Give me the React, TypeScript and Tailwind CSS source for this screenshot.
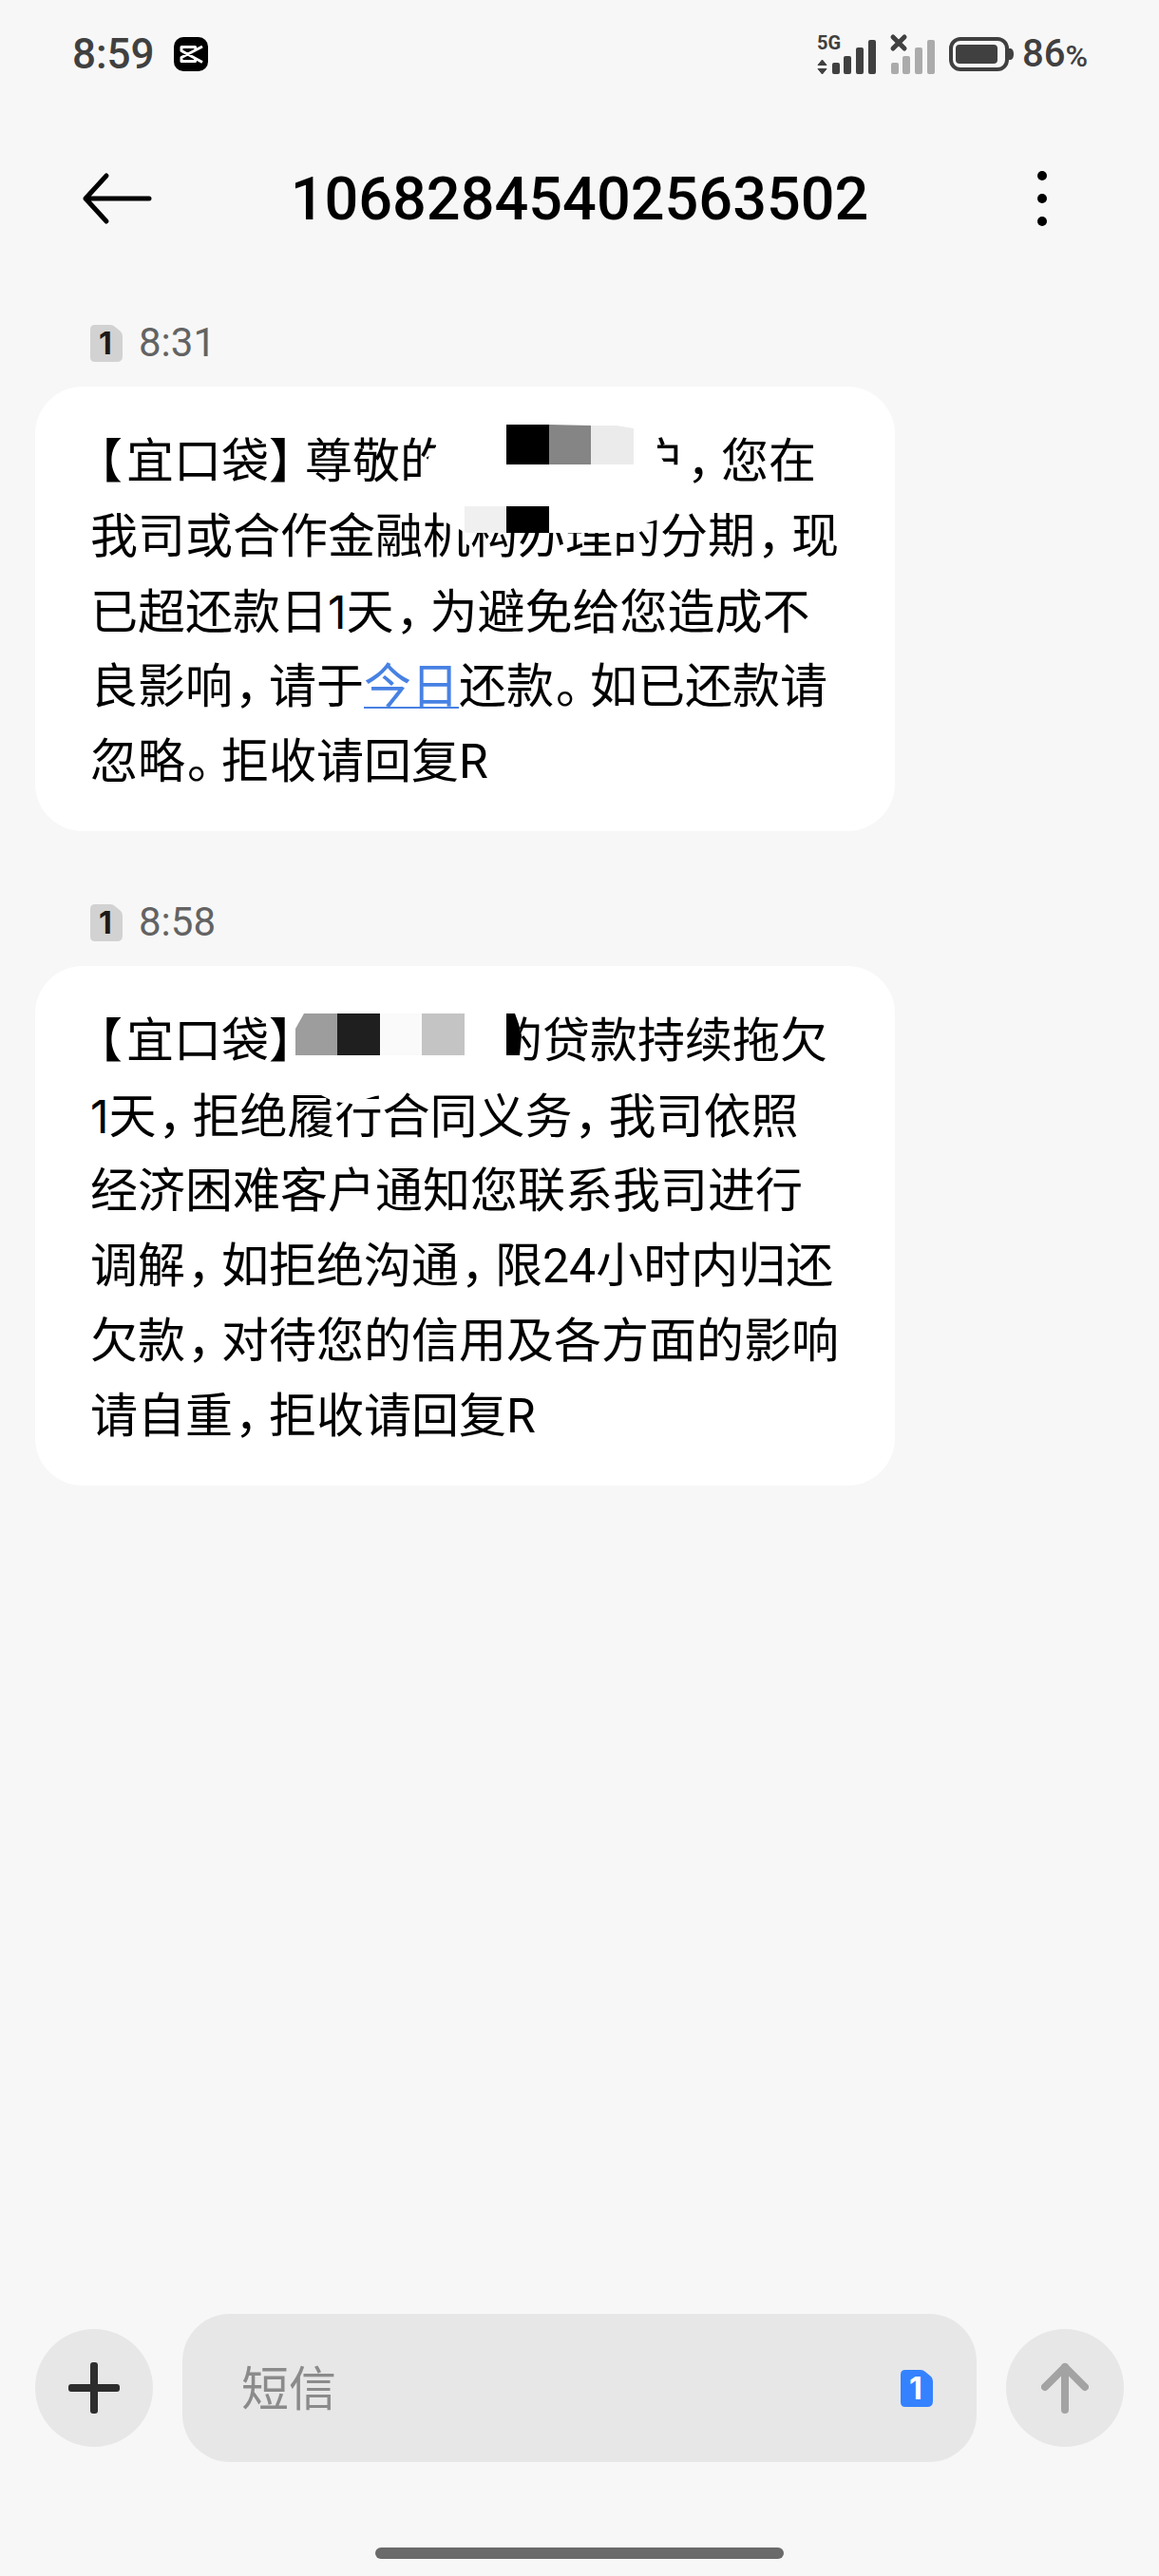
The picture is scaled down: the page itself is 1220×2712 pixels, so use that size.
import { useState } from "react"
import type { ReactNode } from "react"

type simBadgeProps = {
    className: string
}

type messageProps = {
    time: string
    children: ReactNode
}

const signalBars = [
    { x: 16, y: 30, h: 12 },
    { x: 28, y: 23, h: 19 },
    { x: 41, y: 14, h: 28 },
    { x: 54, y: 6, h: 36 },
]

function SimBadge({ className }: simBadgeProps) {
    return (
        <svg viewBox="0 0 34 39" className={`h-[39px] w-[34px] shrink-0 ${className}`} aria-hidden="true">
            <path d="M5 0H21Q24 0 26 2L32 7Q34 9 34 12V33Q34 39 28 39H5Q0 39 0 34V5Q0 0 5 0Z" fill="currentColor" />
            <text x="16" y="31" textAnchor="middle" className="fill-(--digit) font-[Inter,sans-serif] text-[32px] font-bold">1</text>
        </svg>
    )
}

function StatusBar() {
    return (
        <div className="flex h-[114px] items-center justify-between pl-[76px] pr-[75px] text-[#404040]">
            <div className="flex items-center gap-5">
                <span className="text-[44px] leading-none font-medium">8:59</span>
                <svg viewBox="0 0 36 36" className="h-9 w-9" aria-hidden="true">
                    <rect width="36" height="36" rx="10" fill="#000" />
                    <path d="M30 10L8 21.500V25.500H22.500V23.500M30 26.500L8 14.500V10.500H22.500V12.500" fill="none" stroke="#fff" strokeWidth="3" strokeLinejoin="round" />
                </svg>
            </div>
            <div className="flex items-center">
                <svg viewBox="0 -6 62 54" className="mr-[13px] h-[54px] w-[62px]" aria-hidden="true">
                    <text x="0" y="16" fill="currentColor" className="text-[20px] font-bold">5G</text>
                    <path d="M5.500 27L10 32.500H1ZM5.500 42L1 36.500H10Z" fill="currentColor" stroke="currentColor" strokeWidth="1" strokeLinejoin="round" />
                    {signalBars.map((bar) => (
                        <rect key={bar.x} x={bar.x} y={bar.y} width="8" height={bar.h} rx="2" fill="currentColor" />
                    ))}
                </svg>
                <svg viewBox="13 -6 49 54" className="mr-[15px] h-[54px] w-[49px]" aria-hidden="true">
                    <path d="M18 3L30 15M30 3L18 15" stroke="currentColor" strokeWidth="5" strokeLinecap="round" />
                    {signalBars.map((bar) => (
                        <rect key={bar.x} x={bar.x} y={bar.y} width="8" height={bar.h} rx="2" fill="#ababab" />
                    ))}
                </svg>
                <svg viewBox="0 0 68 36" className="mr-[9px] h-9 w-[68px]" aria-hidden="true">
                    <rect x="2" y="2" width="59" height="32" rx="10" fill="none" stroke="currentColor" strokeWidth="4" />
                    <rect x="7" y="8" width="44" height="20" rx="4" fill="currentColor" />
                    <path d="M63 12H65Q68 13 68 18T65 24H63Z" fill="currentColor" />
                </svg>
                <span className="text-[40px] leading-none font-medium">
                    86<span className="text-[32px]">%</span>
                </span>
            </div>
        </div>
    )
}

function Header() {
    return (
        <header className="flex h-[190px] items-center justify-between px-[84px]">
            <button type="button" aria-label="返回" className="flex h-20 w-[78px] items-center">
                <svg viewBox="0 0 78 56" className="h-14 w-[78px]" fill="none" stroke="#000" strokeWidth="5" strokeLinejoin="round" strokeLinecap="round">
                    <path d="M73 28H6M28 4L6 28L28 52" />
                </svg>
            </button>
            <h1 className="text-[63px] leading-none font-medium text-black">10682845402563502</h1>
            <button type="button" aria-label="更多" className="flex h-20 w-[78px] flex-col items-center justify-center gap-[14px]">
                <span className="h-[10px] w-[10px] rounded-full bg-black" />
                <span className="h-[10px] w-[10px] rounded-full bg-black" />
                <span className="h-[10px] w-[10px] rounded-full bg-black" />
            </button>
        </header>
    )
}

// Fullwidth marks are set narrower than the characters around them
function Mark({ children }: { children: string }) {
    return <span className="inline-block w-[38px] pl-0.5 [font-feature-settings:'halt']">{children}</span>
}

function Tag() {
    return (
        <>
            <span className="inline-block w-[38px] pr-1 text-right [font-feature-settings:'halt']">【</span>
            宜口袋
            <span className="inline-block w-[38px] [font-feature-settings:'halt']">】</span>
        </>
    )
}

function One() {
    return <span className="font-[Inter,sans-serif] text-[48px]">1</span>
}

function Line({ children }: { children: ReactNode }) {
    return <span className="block h-[79px] whitespace-nowrap">{children}</span>
}

function Message({ time, children }: messageProps) {
    return (
        <article>
            <div className="mb-[22px] flex h-12 items-center gap-[17px] pl-[58px]">
                <SimBadge className="text-[#d2d2d2] [--digit:#1a1a1a]" />
                <time className="text-[42px] leading-none text-[#636363]">{time}</time>
            </div>
            <div className="relative w-[79%] rounded-[50px] bg-white px-[58px] pt-10 pb-[33px] text-[50px] leading-[79px] text-black">
                {children}
            </div>
        </article>
    )
}

export default function App() {
    const [draft, setDraft] = useState<string>("")

    return (
        <div lang="zh-CN" className="flex min-h-screen flex-col bg-[#f7f7f7] font-[Roboto,'Noto_Sans_CJK_SC',sans-serif]">
            <StatusBar />
            <Header />

            <main className="flex flex-1 flex-col gap-[72px] px-[37px] pt-[33px]">
                <Message time="8:31">
                    <p>
                        <Line>
                            <Tag />尊敬的<span className="inline-block w-[200px]" />户<Mark>，</Mark>您在
                        </Line>
                        <Line>我司或合作金融机构办理的分期<Mark>，</Mark>现</Line>
                        <Line>已超还款日<One />天<Mark>，</Mark>为避免给您造成不</Line>
                        <Line>
                            良影响<Mark>，</Mark>请于
                            <a href="#today" className="text-[#4781e3] underline decoration-2 underline-offset-4">今日</a>
                            还款<Mark>。</Mark>如已还款请
                        </Line>
                        <Line>忽略<Mark>。</Mark>拒收请回复R</Line>
                    </p>
                    <svg viewBox="0 0 905 468" className="pointer-events-none absolute top-0 left-0 h-[468px] w-[905px]" aria-hidden="true">
                        <path d="M422 30V63L415 73L410 83L409 125H686V86L664 83L655 68V30Z" fill="#fff" />
                        <path d="M425 125V139L438 146L448 151L452 154H632L643 144L655 140L660 125Z" fill="#fff" />
                        <path d="M496 40H541V82H496Z" fill="#000" />
                        <path d="M541 40L585 41V82H541Z" fill="#858585" />
                        <path d="M585 41L612 41L630 44V82H585Z" fill="#ebebeb" />
                        <path d="M452 126H496V154H455Q452 154 452 151Z" fill="#f0f0f0" />
                        <path d="M496 126H541V154H496Z" fill="#000" />
                    </svg>
                </Message>

                <Message time="8:58">
                    <p>
                        <Line>
                            <Tag /><span className="inline-block w-[200px]" />的贷款持续拖欠
                        </Line>
                        <Line><One />天<Mark>，</Mark>拒绝履行合同义务<Mark>，</Mark>我司依照</Line>
                        <Line>经济困难客户通知您联系我司进行</Line>
                        <Line>调解<Mark>，</Mark>如拒绝沟通<Mark>，</Mark>限24小时内归还</Line>
                        <Line>欠款<Mark>，</Mark>对待您的信用及各方面的影响</Line>
                        <Line>请自重<Mark>，</Mark>拒收请回复R</Line>
                    </p>
                    <svg viewBox="0 0 905 547" className="pointer-events-none absolute top-0 left-0 h-[547px] w-[905px]" aria-hidden="true">
                        <path d="M452 40H505L509 61L512 73L509 112H452Z" fill="#fff" />
                        <path d="M290 131L301 136L313 142L323 144L348 140L365 135V131Z" fill="#fff" />
                        <path d="M283 50H318V94H274V66Z" fill="#9d9d9d" />
                        <path d="M318 50H363V94H318Z" fill="#1f1f1f" />
                        <path d="M363 50H407V94H363Z" fill="#fafafa" />
                        <path d="M407 50H452V94H407Z" fill="#c4c4c4" />
                        <path d="M496 50H505L509 61L512 73L510 94H496Z" fill="#000" />
                    </svg>
                </Message>
            </main>

            <footer className="px-[37px] pb-[18px]">
                <form className="flex items-center gap-[31px]" onSubmit={(e) => e.preventDefault()}>
                    <button type="button" aria-label="添加" className="flex h-[124px] w-[124px] shrink-0 items-center justify-center rounded-full bg-[#e7e7e7]">
                        <svg viewBox="0 0 54 54" className="h-[54px] w-[54px]" fill="#2d2d2d">
                            <rect x="0" y="23" width="54" height="8" rx="3" />
                            <rect x="23" y="0" width="8" height="54" rx="3" />
                        </svg>
                    </button>
                    <div className="flex h-[156px] min-w-0 flex-1 items-center rounded-[50px] bg-[#e7e7e7] pr-[46px] pl-[62px]">
                        <input
                            type="text"
                            aria-label="短信"
                            placeholder="短信"
                            value={draft}
                            onChange={(e) => setDraft(e.target.value)}
                            className="h-20 min-w-0 flex-1 bg-transparent pt-1 text-[50px] text-black outline-none placeholder:text-[#8b8b8b]"
                        />
                        <SimBadge className="text-[#3482ff] [--digit:#ffffff]" />
                    </div>
                    <button type="submit" aria-label="发送" className="flex h-[124px] w-[124px] shrink-0 items-center justify-center rounded-full bg-[#e7e7e7]">
                        <svg viewBox="0 0 50 54" className="h-[54px] w-[50px]" fill="none" stroke="#a3a3a3" strokeWidth="8">
                            <path d="M25 5V50" strokeLinecap="round" />
                            <path d="M4 26L25 5L46 26" strokeLinejoin="round" strokeLinecap="round" />
                        </svg>
                    </button>
                </form>
                <div className="mx-auto mt-[90px] h-3 w-[35%] rounded-full bg-[#6a6a6a] box-content px-[14px]" />
            </footer>
        </div>
    )
}
